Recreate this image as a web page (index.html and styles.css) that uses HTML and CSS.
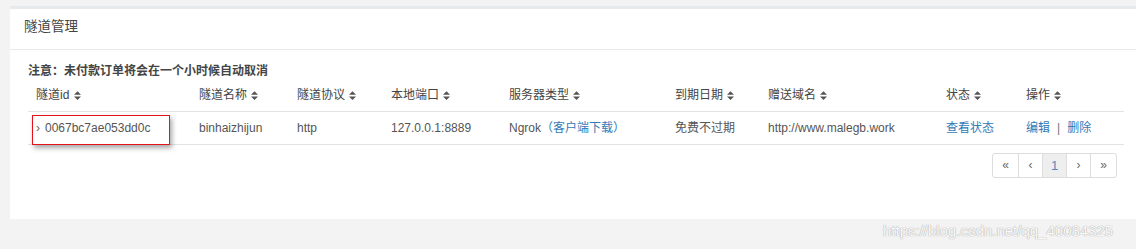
FILE: index.html
```html
<!DOCTYPE html>
<html lang="zh-CN">
<head>
    <meta charset="UTF-8" />
    <title>隧道管理</title>
    <link rel="stylesheet" href="styles.css">
</head>
<body>
    <svg width="0" height="0" style="position:absolute">
        <symbol id="sort" viewBox="0 0 8 10">
            <path d="M0 4 L4 0 L8 4 Z M0 6 L8 6 L4 10 Z" fill="currentColor"/>
        </symbol>
    </svg>
    <div class="panel">
        <div class="panel-head">隧道管理</div>
        <div class="panel-body">
            <p class="notice">注意：未付款订单将会在一个小时候自动取消</p>
            <table class="tunnel-table">
                <colgroup>
                    <col style="width:163px"><col style="width:98px"><col style="width:94px">
                    <col style="width:118px"><col style="width:166px"><col style="width:93px">
                    <col style="width:178px"><col style="width:80px"><col>
                </colgroup>
                <thead>
                    <tr>
                        <th>隧道id <svg class="sort"><use href="#sort"/></svg></th>
                        <th>隧道名称 <svg class="sort"><use href="#sort"/></svg></th>
                        <th>隧道协议 <svg class="sort"><use href="#sort"/></svg></th>
                        <th>本地端口 <svg class="sort"><use href="#sort"/></svg></th>
                        <th>服务器类型 <svg class="sort"><use href="#sort"/></svg></th>
                        <th>到期日期 <svg class="sort"><use href="#sort"/></svg></th>
                        <th>赠送域名 <svg class="sort"><use href="#sort"/></svg></th>
                        <th>状态 <svg class="sort"><use href="#sort"/></svg></th>
                        <th>操作 <svg class="sort"><use href="#sort"/></svg></th>
                    </tr>
                </thead>
                <tbody>
                    <tr>
                        <td class="id-cell">
                            <span class="mark"></span>
                            <span class="chev">›</span>0067bc7ae053dd0c
                        </td>
                        <td>binhaizhijun</td>
                        <td>http</td>
                        <td>127.0.0.1:8889</td>
                        <td>Ngrok<a href="#">（客户端下载）</a></td>
                        <td>免费不过期</td>
                        <td>http://www.malegb.work</td>
                        <td><a href="#">查看状态</a></td>
                        <td><a href="#">编辑</a><span class="sep">|</span><a href="#">删除</a></td>
                    </tr>
                </tbody>
            </table>
            <div class="pager-row">
                <ul class="pager">
                    <li>«</li>
                    <li>‹</li>
                    <li class="active">1</li>
                    <li>›</li>
                    <li>»</li>
                </ul>
            </div>
        </div>
    </div>
    <div class="watermark">https://blog.csdn.net/qq_40084325</div>
</body>
</html>
```

FILE: styles.css
```css
body {
    margin: 0;
    background: #f3f3f3;
    font-family: "Liberation Sans", "Noto Sans CJK SC", sans-serif;
    font-size: 12px;
    color: #555;
}

.panel {
    margin: 6px 0 0 10px;
    background: #fff;
    border-top: 3px solid #e7eaec;
    height: 210px;
}

.panel-head {
    height: 40px;
    line-height: 36px;
    padding-left: 14px;
    font-size: 13.5px;
    color: #444;
    border-bottom: 1px solid #e7eaec;
}

.panel-body {
    padding: 13px 12px 0 18px;
}

.notice {
    margin: 0;
    font-weight: bold;
    color: #444;
    line-height: 16px;
}

.tunnel-table {
    width: 1096px;
    border-collapse: collapse;
    table-layout: fixed;
    margin-top: 1px;
}

.tunnel-table th,
.tunnel-table td {
    text-align: left;
    padding: 8px;
    line-height: 16px;
    white-space: nowrap;
    border-bottom: 1px solid #e3e3e3;
}

.tunnel-table th {
    font-weight: normal;
    color: #444;
    padding-top: 7px;
}

.sort {
    width: 7px;
    height: 9px;
    color: #555;
    vertical-align: -1px;
    margin-left: 1px;
}

.id-cell {
    position: relative;
    color: #555;
}

.chev {
    color: #666;
    margin-right: 5px;
}

.mark {
    position: absolute;
    left: 4px;
    top: 3px;
    width: 136px;
    height: 28px;
    border: 1px solid #e3121b;
    box-shadow: 2px 3px 5px rgba(0, 0, 0, 0.35);
}

a {
    color: #337ab7;
    text-decoration: none;
}

.sep {
    color: #777;
    margin: 0 7px;
}

.pager-row {
    display: flex;
    justify-content: flex-end;
    padding-right: 7px;
    margin-top: 8px;
}

.pager {
    display: flex;
    list-style: none;
    margin: 0;
    padding: 0;
    border: 1px solid #ddd;
    border-radius: 3px;
}

.pager li {
    width: 23px;
    height: 23px;
    line-height: 23px;
    text-align: center;
    color: #666;
    font-size: 12px;
    border-left: 1px solid #ddd;
}

.pager li:first-child {
    border-left: 0;
    width: 25px;
}

.pager li:last-child {
    width: 25px;
}

.pager li.active {
    background: #eee;
    color: #5b87b8;
    font-size: 13px;
}

.watermark {
    position: absolute;
    left: 883px;
    top: 222px;
    font-size: 15px;
    color: #fafafa;
    text-shadow: 0 0 1px #aaa, 0 0 1px #aaa;
}
```
